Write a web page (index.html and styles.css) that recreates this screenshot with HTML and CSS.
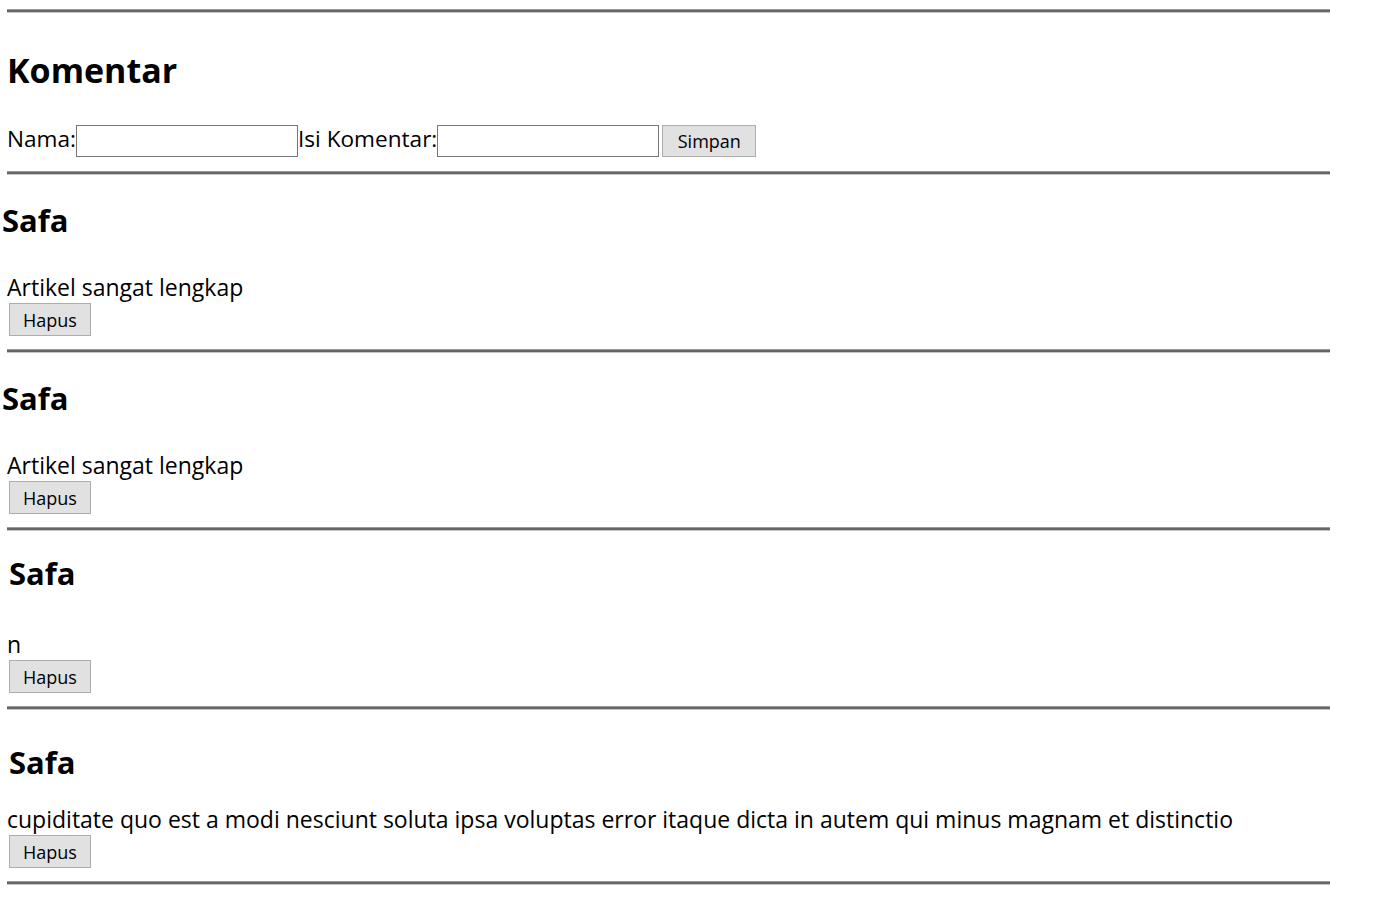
FILE: index.html
```html
<!DOCTYPE html>
<html lang="id">
<head>
<meta charset="utf-8">
<title>Komentar</title>
<link rel="stylesheet" href="styles.css">
</head>
<body>
<div class="page">
  <div class="rule"></div>
  <h2 class="title">Komentar</h2>
  <form class="form-row">
    <label class="label">Nama:</label><input class="field" type="text"><label class="label">Isi Komentar:</label><input class="field" type="text"><button class="btn btn-save" type="button">Simpan</button>
  </form>
  <div class="rule rule-form"></div>

  <div class="comment">
    <h3 class="name">Safa</h3>
    <p class="text">Artikel sangat lengkap</p>
    <button class="btn btn-del" type="button">Hapus</button>
  </div>
  <div class="rule rule-comment"></div>

  <div class="comment">
    <h3 class="name">Safa</h3>
    <p class="text">Artikel sangat lengkap</p>
    <button class="btn btn-del" type="button">Hapus</button>
  </div>
  <div class="rule rule-comment"></div>

  <div class="comment comment-short">
    <h3 class="name name-inset">Safa</h3>
    <p class="text">n</p>
    <button class="btn btn-del" type="button">Hapus</button>
  </div>
  <div class="rule rule-comment"></div>

  <div class="comment comment-last">
    <h3 class="name name-inset">Safa</h3>
    <p class="text">cupiditate quo est a modi nesciunt soluta ipsa voluptas error itaque dicta in autem qui minus magnam et distinctio</p>
    <button class="btn btn-del" type="button">Hapus</button>
  </div>
  <div class="rule rule-comment"></div>
</div>
</body>
</html>
```

FILE: styles.css
```css
* { box-sizing: border-box; }

html, body {
  margin: 0;
  padding: 0;
  background: #ffffff;
}

body {
  font-family: "Open Sans", "Noto Sans", "DejaVu Sans", sans-serif;
  color: #000000;
}

.page {
  display: flex;
  flex-direction: column;
  align-items: flex-start;
  padding-top: 9px;
}

.rule {
  margin-left: 7px;
  width: 1323px;
  height: 4px;
  background: #666666;
  border-top: 1px solid #9a9a9a;
  border-bottom: 1px solid #c6c6c6;
  flex: none;
}

.title {
  margin: 37px 0 0 7px;
  font-size: 34px;
  line-height: 40px;
  font-weight: 700;
}

.form-row {
  display: flex;
  align-items: center;
  margin: 35px 0 0 7px;
  height: 32px;
}

.label {
  font-size: 22.6px;
  line-height: 28px;
  padding-bottom: 4px;
}

.field {
  width: 222px;
  height: 32px;
  border: 1px solid #767676;
  border-radius: 0;
  background: #ffffff;
  padding: 0 4px;
  margin: 0;
}

.btn {
  font-family: "Open Sans", "Noto Sans", "DejaVu Sans", sans-serif;
  font-size: 18px;
  color: #000000;
  background: #e1e1e1;
  border: 1px solid #adadad;
  border-radius: 0;
  margin: 0;
  padding: 0;
  line-height: 30px;
}

.btn-save {
  margin-left: 3px;
  width: 94px;
  height: 32px;
}

.rule-form {
  margin-top: 14px;
}

.comment {
  display: flex;
  flex-direction: column;
  align-items: flex-start;
}

.name {
  margin: 27px 0 0 2px;
  font-size: 31px;
  line-height: 36px;
  font-weight: 700;
}

.name-inset {
  margin-left: 9px;
}

.text {
  margin: 34px 0 0 7px;
  font-size: 23px;
  line-height: 30px;
}

.btn-del {
  margin: 1px 0 0 9px;
  width: 82px;
  height: 33px;
}

.rule-comment {
  margin-top: 13px;
}

.comment-short .name {
  margin-top: 24px;
}

.comment-short .text {
  margin-top: 38px;
}

.comment-last .name {
  margin-top: 34px;
}

.comment-last .text {
  margin-top: 24px;
}
```
